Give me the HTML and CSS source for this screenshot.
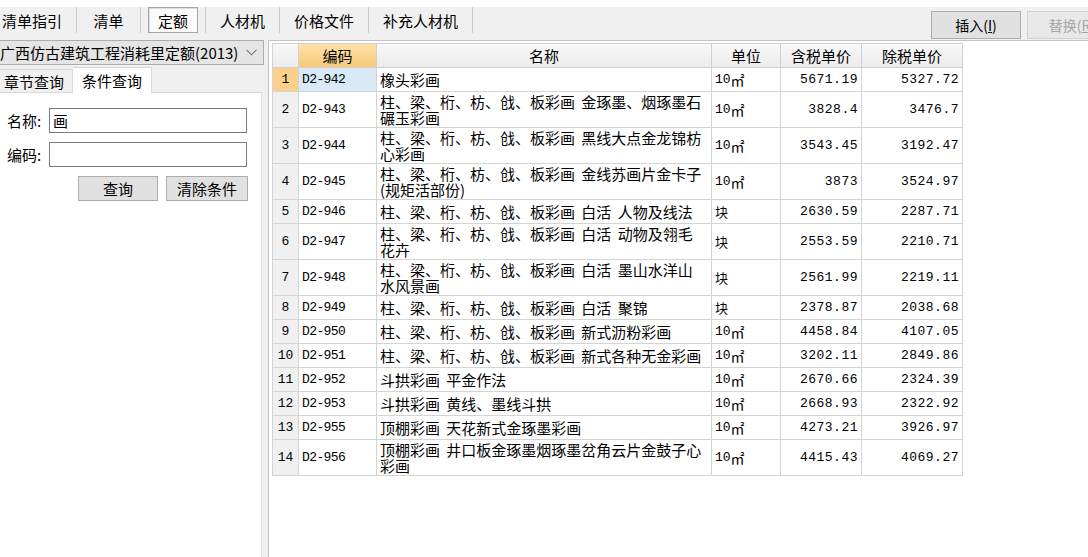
FILE: index.html
```html
<!DOCTYPE html>
<html lang="zh-CN">
<head>
<meta charset="utf-8">
<title>定额查询</title>
<link rel="stylesheet" href="styles.css">
</head>
<body>
<div class="window">
  <div class="toolbar">
    <nav class="tabs">
      <span class="tab first">清单指引</span>
      <span class="tab">清单</span>
      <span class="tab current"><span class="pressed">定额</span></span>
      <span class="tab">人材机</span>
      <span class="tab">价格文件</span>
      <span class="tab">补充人材机</span>
    </nav>
    <div class="actions">
      <button class="btn">插入(<u>I</u>)</button>
      <button class="btn disabled">替换(<u>R</u>)</button>
    </div>
  </div>
  <div class="main">
    <aside class="side">
      <div class="select">
        <span class="select-text">广西仿古建筑工程消耗里定额(2013)</span>
        <svg class="chevron" width="11" height="7" viewBox="0 0 11 7"><path d="M0.5 0.8 L5.5 5.8 L10.5 0.8" fill="none" stroke="#7a7a7a" stroke-width="1.1"/></svg>
      </div>
      <div class="subtabs">
        <span class="subtab">章节查询</span>
        <span class="subtab active">条件查询</span>
      </div>
      <div class="query">
        <div class="field"><span class="field-label">名称:</span><span class="input">画</span></div>
        <div class="field"><span class="field-label">编码:</span><span class="input"></span></div>
        <div class="qbtns">
          <button class="qbtn search">查询</button>
          <button class="qbtn clear">清除条件</button>
        </div>
      </div>
    </aside>
    <div class="splitter"></div>
    <section class="grid-area">
      <div class="table">
        <div class="row head">
          <div class="cell num"></div>
          <div class="cell hcode">编码</div>
          <div class="cell hc">名称</div>
          <div class="cell hc">单位</div>
          <div class="cell hc">含税单价</div>
          <div class="cell hc">除税单价</div>
        </div>
        <div class="row sel">
          <div class="cell num">1</div>
          <div class="cell code">D2-942</div>
          <div class="cell name">橡头彩画</div>
          <div class="cell unit">10<span class="m2">㎡</span></div>
          <div class="cell price">5671.19</div>
          <div class="cell price">5327.72</div>
        </div>
        <div class="row tall">
          <div class="cell num">2</div>
          <div class="cell code">D2-943</div>
          <div class="cell name"><span>柱、梁、桁、枋、戗、板彩画 金琢墨、烟琢墨石<br>碾玉彩画</span></div>
          <div class="cell unit">10<span class="m2">㎡</span></div>
          <div class="cell price">3828.4</div>
          <div class="cell price">3476.7</div>
        </div>
        <div class="row tall">
          <div class="cell num">3</div>
          <div class="cell code">D2-944</div>
          <div class="cell name"><span>柱、梁、桁、枋、戗、板彩画 黑线大点金龙锦枋<br>心彩画</span></div>
          <div class="cell unit">10<span class="m2">㎡</span></div>
          <div class="cell price">3543.45</div>
          <div class="cell price">3192.47</div>
        </div>
        <div class="row tall">
          <div class="cell num">4</div>
          <div class="cell code">D2-945</div>
          <div class="cell name"><span>柱、梁、桁、枋、戗、板彩画 金线苏画片金卡子<br>(规矩活部份)</span></div>
          <div class="cell unit">10<span class="m2">㎡</span></div>
          <div class="cell price">3873</div>
          <div class="cell price">3524.97</div>
        </div>
        <div class="row">
          <div class="cell num">5</div>
          <div class="cell code">D2-946</div>
          <div class="cell name">柱、梁、桁、枋、戗、板彩画 白活 人物及线法</div>
          <div class="cell unit">块</div>
          <div class="cell price">2630.59</div>
          <div class="cell price">2287.71</div>
        </div>
        <div class="row tall">
          <div class="cell num">6</div>
          <div class="cell code">D2-947</div>
          <div class="cell name"><span>柱、梁、桁、枋、戗、板彩画 白活 动物及翎毛<br>花卉</span></div>
          <div class="cell unit">块</div>
          <div class="cell price">2553.59</div>
          <div class="cell price">2210.71</div>
        </div>
        <div class="row tall">
          <div class="cell num">7</div>
          <div class="cell code">D2-948</div>
          <div class="cell name"><span>柱、梁、桁、枋、戗、板彩画 白活 墨山水洋山<br>水风景画</span></div>
          <div class="cell unit">块</div>
          <div class="cell price">2561.99</div>
          <div class="cell price">2219.11</div>
        </div>
        <div class="row">
          <div class="cell num">8</div>
          <div class="cell code">D2-949</div>
          <div class="cell name">柱、梁、桁、枋、戗、板彩画 白活 聚锦</div>
          <div class="cell unit">块</div>
          <div class="cell price">2378.87</div>
          <div class="cell price">2038.68</div>
        </div>
        <div class="row">
          <div class="cell num">9</div>
          <div class="cell code">D2-950</div>
          <div class="cell name">柱、梁、桁、枋、戗、板彩画 新式沥粉彩画</div>
          <div class="cell unit">10<span class="m2">㎡</span></div>
          <div class="cell price">4458.84</div>
          <div class="cell price">4107.05</div>
        </div>
        <div class="row">
          <div class="cell num">10</div>
          <div class="cell code">D2-951</div>
          <div class="cell name">柱、梁、桁、枋、戗、板彩画 新式各种无金彩画</div>
          <div class="cell unit">10<span class="m2">㎡</span></div>
          <div class="cell price">3202.11</div>
          <div class="cell price">2849.86</div>
        </div>
        <div class="row">
          <div class="cell num">11</div>
          <div class="cell code">D2-952</div>
          <div class="cell name">斗拱彩画 平金作法</div>
          <div class="cell unit">10<span class="m2">㎡</span></div>
          <div class="cell price">2670.66</div>
          <div class="cell price">2324.39</div>
        </div>
        <div class="row">
          <div class="cell num">12</div>
          <div class="cell code">D2-953</div>
          <div class="cell name">斗拱彩画 黄线、墨线斗拱</div>
          <div class="cell unit">10<span class="m2">㎡</span></div>
          <div class="cell price">2668.93</div>
          <div class="cell price">2322.92</div>
        </div>
        <div class="row">
          <div class="cell num">13</div>
          <div class="cell code">D2-955</div>
          <div class="cell name">顶棚彩画 天花新式金琢墨彩画</div>
          <div class="cell unit">10<span class="m2">㎡</span></div>
          <div class="cell price">4273.21</div>
          <div class="cell price">3926.97</div>
        </div>
        <div class="row tall">
          <div class="cell num">14</div>
          <div class="cell code">D2-956</div>
          <div class="cell name"><span>顶棚彩画 井口板金琢墨烟琢墨岔角云片金鼓子心<br>彩画</span></div>
          <div class="cell unit">10<span class="m2">㎡</span></div>
          <div class="cell price">4415.43</div>
          <div class="cell price">4069.27</div>
        </div>
      </div>
    </section>
  </div>
</div>
</body>
</html>
```

FILE: styles.css
```css
* { box-sizing: border-box; }
html, body { margin: 0; padding: 0; }
body {
  width: 1088px;
  height: 557px;
  overflow: hidden;
  background: #fff;
  font-family: "Noto Sans CJK SC", "Noto Sans", sans-serif;
  font-size: 15px;
  color: #000;
}
.window {
  margin-top: 7px;
  height: 550px;
  background: #f0f0f0;
  display: flex;
  flex-direction: column;
}

/* top toolbar */
.toolbar {
  flex: none;
  height: 33px;
  display: flex;
  align-items: flex-start;
}
.tabs { display: flex; height: 26px; }
.tab {
  display: flex;
  align-items: center;
  justify-content: center;
  min-width: 64px;
  padding: 0 14px;
  border-right: 1px solid #cbcbcb;
  line-height: 1;
  white-space: nowrap;
}
.tab.first { padding-left: 2px; min-width: 0; }
.tab.current { padding: 0 7px; }
.pressed {
  display: flex;
  align-items: center;
  height: 26px;
  padding: 0 9px;
  border: 1px solid #a5a5a5;
  background: #fbfbfb;
  box-shadow: inset 1px 1px 0 #dedede;
}
.actions {
  margin-left: auto;
  flex: none;
  width: 157px;
  overflow: hidden;
  display: flex;
  gap: 6px;
  padding-top: 4px;
}
.btn {
  flex: none;
  width: 90px;
  height: 28px;
  padding: 0;
  font-family: inherit;
  font-size: 14px;
  color: #000;
  background: #e1e1e1;
  border: 1px solid #adadad;
  display: flex;
  align-items: center;
  justify-content: center;
  white-space: nowrap;
}
.btn.disabled {
  color: #a6a6a6;
  background: #e8e8e8;
  border-color: #d2d2d2;
}

/* main */
.main {
  flex: 1;
  min-height: 0;
  display: flex;
}
.side {
  flex: none;
  width: 264px;
  display: flex;
  flex-direction: column;
}
.select {
  flex: none;
  height: 25px;
  display: flex;
  align-items: center;
  justify-content: space-between;
  background: #e5e5e5;
  border: 1px solid #adadad;
  border-left: none;
  padding: 0 6px 0 0;
  white-space: nowrap;
}
.select-text { line-height: 1; }
.chevron { flex: none; }
.subtabs {
  flex: none;
  height: 28px;
  display: flex;
  align-items: flex-end;
  border-bottom: 1px solid #d9d9d9;
  margin-right: 2px;
}
.subtab {
  height: 23px;
  display: flex;
  align-items: center;
  padding: 0 8px 0 4px;
  border: 1px solid #d9d9d9;
  border-left: none;
  border-bottom: none;
  background: #f0f0f0;
  line-height: 1;
}
.subtab.active {
  height: 26px;
  padding: 0 9px;
  border-left: none;
  background: #fff;
  margin-bottom: -1px;
}
.query {
  flex: 1;
  background: #fff;
  margin-right: 2px;
  border-right: 1px solid #dcdcdc;
  padding: 15px 0 0 7px;
}
.field {
  display: flex;
  align-items: center;
  height: 25px;
  margin-bottom: 9px;
}
.field-label { width: 42px; line-height: 1; }
.input {
  width: 198px;
  height: 25px;
  border: 1px solid #7a7a7a;
  background: #fff;
  padding-left: 3px;
  display: flex;
  align-items: center;
  line-height: 1;
}
.qbtns {
  display: flex;
  gap: 8px;
  padding-left: 71px;
}
.qbtn {
  height: 25px;
  padding: 0;
  font-family: inherit;
  font-size: 15px;
  color: #000;
  background: #e1e1e1;
  border: 1px solid #adadad;
  display: flex;
  align-items: center;
  justify-content: center;
}
.qbtn.search { width: 80px; }
.qbtn.clear { width: 82px; }

.splitter { flex: none; width: 4px; background: #f0f0f0; }

/* grid */
.grid-area {
  flex: 1;
  background: #fff;
  border-left: 1px solid #c4c4c4;
  border-top: 1px solid #c4c4c4;
  padding: 2px 0 0 3px;
}
.table {
  width: max-content;
  border-left: 1px solid #d4d4d4;
  border-top: 1px solid #d4d4d4;
}
.row {
  display: grid;
  grid-template-columns: 26px 78px 335px 69px 81px 101px;
  height: 24px;
}
.row.tall { height: 36px; }
.cell {
  display: flex;
  align-items: center;
  border-right: 1px solid #d4d4d4;
  border-bottom: 1px solid #d4d4d4;
  overflow: hidden;
  white-space: nowrap;
}
.head .cell {
  justify-content: center;
  background: linear-gradient(#f8f8f8, #ececec);
  border-color: #d0d0d0;
  line-height: 1;
}
.head .hcode { background: linear-gradient(#fde2a9, #f8c978); }
.num {
  justify-content: center;
  background: #f0f0f0;
  font-family: "Liberation Mono", monospace;
  font-size: 13px;
}
.sel .num { background: #fbd08b; }
.code {
  padding-left: 3px;
  font-family: "Liberation Mono", monospace;
  font-size: 13px;
  letter-spacing: -0.6px;
}
.sel .code { background: #d8e9f8; }
.name {
  padding-left: 3px;
  font-size: 15px;
  line-height: 16px;
  word-spacing: 3px;
}
.name span { display: block; }
.unit {
  padding-left: 3px;
  font-family: "Liberation Mono", monospace;
  font-size: 13px;
}
.unit .m2 {
  font-family: "Noto Sans CJK SC", sans-serif;
  font-size: 14px;
}
.price {
  justify-content: flex-end;
  padding-right: 3px;
  font-family: "Liberation Mono", monospace;
  font-size: 13px;
  letter-spacing: 0.5px;
}
```
